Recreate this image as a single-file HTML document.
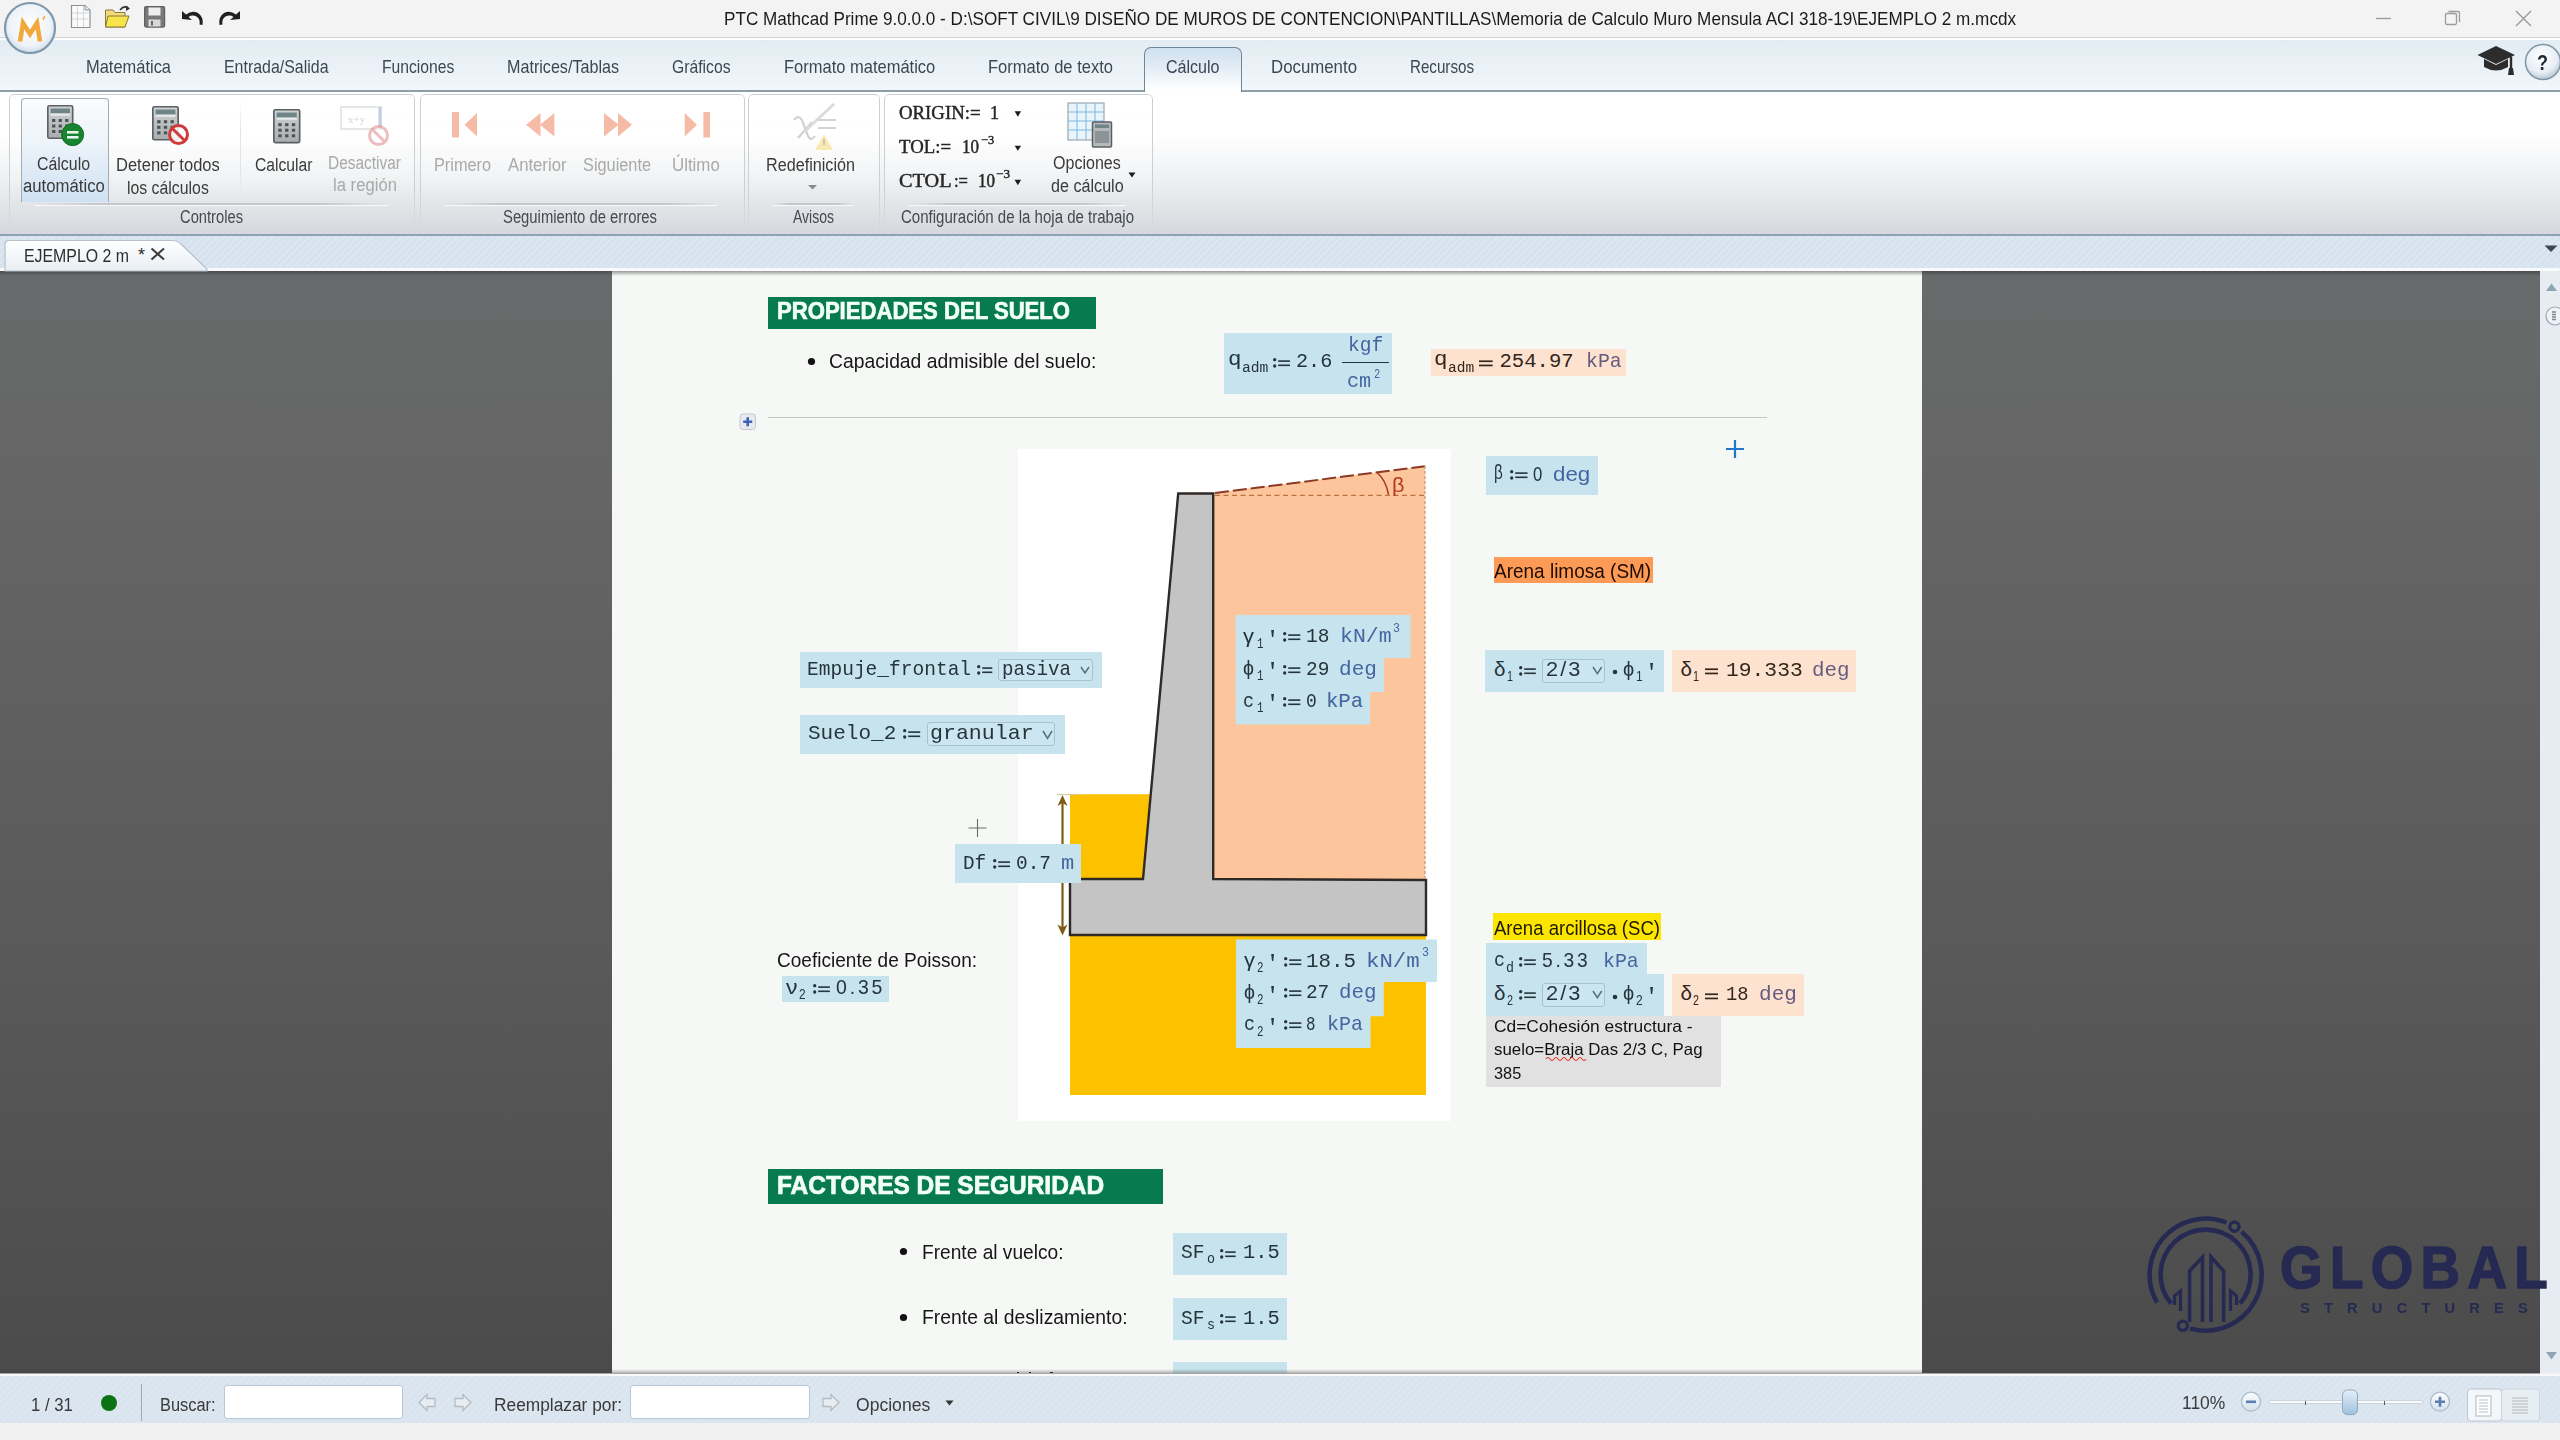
<!DOCTYPE html>
<html><head><meta charset="utf-8"><title>Mathcad</title>
<style>
html,body{margin:0;padding:0;width:2560px;height:1440px;overflow:hidden;background:#f0f0f0}
.r{position:absolute;display:block}
.t{position:absolute;white-space:pre;line-height:1;transform-origin:0 0}
svg.r{overflow:visible}
</style></head><body>
<div class="r" style="left:0.00px;top:0.00px;width:2560.00px;height:37.00px;background:#f3f3f3;"></div>
<div class="r" style="left:0.00px;top:37.00px;width:2560.00px;height:1.00px;background:#cfd3d6;"></div>
<div class="r" style="left:0.00px;top:38.00px;width:2560.00px;height:2.00px;background:#fbfdfe;"></div>
<div class="r" style="left:0.00px;top:40.00px;width:2560.00px;height:50.00px;background:linear-gradient(#e3ecf2,#f1f7fb);"></div>
<div class="r" style="left:0.00px;top:90.00px;width:2560.00px;height:1.50px;background:#8e9fa8;"></div>
<div class="r" style="left:0.00px;top:91.50px;width:2560.00px;height:142.50px;background:linear-gradient(#ffffff 0%,#ffffff 30%,#eef0f2 62%,#d5d9dd 100%);"></div>
<div class="r" style="left:0.00px;top:234.00px;width:2560.00px;height:2.00px;background:#8da4b7;"></div>
<div class="r" style="left:0.00px;top:236.00px;width:2560.00px;height:32.00px;background:repeating-linear-gradient(135deg,#d6e3ef 0px,#d6e3ef 3px,#dbe7f1 3px,#dbe7f1 5px);"></div>
<div class="r" style="left:0.00px;top:268.00px;width:2560.00px;height:3.00px;background:#f8fafb;"></div>
<div class="r" style="left:0.00px;top:271.00px;width:2540.00px;height:1102.00px;background:linear-gradient(#686a6b 0%,#656565 20%,#5a5a5a 60%,#4b4b4b 100%);"></div>
<div class="r" style="left:612.00px;top:271.00px;width:1310.00px;height:1102.00px;background:#f6f8f6;"></div>
<div class="r" style="left:0.00px;top:271.00px;width:2540.00px;height:5.00px;background:linear-gradient(rgba(40,40,40,0.45),rgba(40,40,40,0));"></div>
<div class="r" style="left:2540.00px;top:271.00px;width:20.00px;height:1102.00px;background:#e6ecf2;"></div>
<div class="r" style="left:0.00px;top:1373.50px;width:2560.00px;height:2.50px;background:#f7f8f9;"></div>
<div class="r" style="left:0.00px;top:1376.00px;width:2560.00px;height:47.00px;background:repeating-linear-gradient(135deg,#d9e4ee 0px,#d9e4ee 3px,#dde7f0 3px,#dde7f0 5px);"></div>
<div class="r" style="left:0.00px;top:1423.00px;width:2560.00px;height:17.00px;background:#f1f1f1;"></div>
<svg class="r" style="left:0;top:0" width="300" height="60" viewBox="0 0 300 60">
<defs><radialGradient id="lg" cx="50%" cy="45%" r="55%"><stop offset="0" stop-color="#ffffff"/><stop offset="0.75" stop-color="#eef3f8"/><stop offset="1" stop-color="#cfdbe6"/></radialGradient></defs>
<circle cx="30" cy="28" r="25" fill="url(#lg)" stroke="#7d98ad" stroke-width="2.2"/>
<path d="M20 41.5 L23 23 L30 34 L37 23 L40 41.5" fill="none" stroke="#f3a83a" stroke-width="4.6" stroke-linejoin="miter" stroke-miterlimit="3"/>
<path d="M42.5 17.5 L45.5 15.5 L43.5 21 Z" fill="#f3a83a"/>
<g transform="translate(71,5)">
<path d="M0.5 0.5 H14 L19 5 V22.5 H0.5 Z" fill="#fbfbfb" stroke="#8d9296" stroke-width="1.2"/>
<path d="M14 0.5 V5 H19" fill="#e8e8e8" stroke="#8d9296" stroke-width="1"/>
<path d="M1 8 H18.5 M1 14 H18.5 M6.5 1 V22 M12.5 1 V22" stroke="#c8d0d6" stroke-width="0.8"/>
</g>
<g transform="translate(105,4)">
<path d="M0.5 6 H8 L10 8.5 H20 V23 H0.5 Z" fill="#f0dc7a" stroke="#8a7a3a" stroke-width="1"/>
<path d="M3 12 H24 L20 23 H0.5 Z" fill="#f7e34a" stroke="#8a7a3a" stroke-width="1"/>
<path d="M15 6 Q19 1 23 4" fill="none" stroke="#333" stroke-width="1.6"/>
<path d="M21 1.5 L25 4.5 L21 7 Z" fill="#333"/>
</g>
<g transform="translate(144,6)">
<rect x="0.6" y="0.6" width="20" height="20.5" rx="1.5" fill="#77797b" stroke="#5d5f61" stroke-width="1.2"/>
<rect x="4.5" y="1.5" width="12" height="8" fill="#eeeeee"/>
<rect x="4.5" y="13.5" width="12" height="7" fill="#d8d8d8"/>
<rect x="7" y="15" width="2" height="4.5" fill="#666"/>
</g>
<g transform="translate(180,9)">
<path d="M2 10 L2 2 L6 5.5 Q12 1 18 4 Q24 8 22.5 16 L19.5 15.5 Q20.5 10 16.5 7.5 Q12 5.5 8.5 8 L12 11 Z" fill="#202020"/>
</g>
<g transform="translate(218,9)">
<path d="M22 10 L22 2 L18 5.5 Q12 1 6 4 Q0 8 1.5 16 L4.5 15.5 Q3.5 10 7.5 7.5 Q12 5.5 15.5 8 L12 11 Z" fill="#202020"/>
</g>
</svg>
<span id="t1" class="t" style="left:724.00px;top:9.59px;font-size:18.20px;font-family:'Liberation Sans', sans-serif;color:#1b1b1b;transform:scaleX(0.9418);">PTC Mathcad Prime 9.0.0.0 - D:\SOFT CIVIL\9 DISEÑO DE MUROS DE CONTENCION\PANTILLAS\Memoria de Calculo Muro Mensula ACI 318-19\EJEMPLO 2 m.mcdx</span>
<svg class="r" style="left:2360;top:0" width="200" height="37" viewBox="0 0 200 37">
<path d="M16 18.5 H31" stroke="#9a9a9a" stroke-width="1.3"/>
<rect x="85.5" y="13.5" width="11" height="11" rx="1.5" fill="none" stroke="#9a9a9a" stroke-width="1.3"/>
<path d="M88.5 11.5 H98 Q99.5 11.5 99.5 13 V22" fill="none" stroke="#9a9a9a" stroke-width="1.3"/>
<path d="M156 11 L171 26 M171 11 L156 26" stroke="#9a9a9a" stroke-width="1.4"/>
</svg>
<div class="r" style="left:1143.5px;top:47px;width:96px;height:44px;border:1.5px solid #6f8698;border-bottom:none;border-radius:7px 7px 0 0;background:linear-gradient(#cfe0ef,#e6eef6 50%,#ffffff 95%)"></div>
<span id="t2" class="t" style="left:86.00px;top:57.64px;font-size:18.50px;font-family:'Liberation Sans', sans-serif;color:#3e4750;transform:scaleX(0.8889);">Matemática</span>
<span id="t3" class="t" style="left:224.00px;top:57.64px;font-size:18.50px;font-family:'Liberation Sans', sans-serif;color:#3e4750;transform:scaleX(0.8610);">Entrada/Salida</span>
<span id="t4" class="t" style="left:382.00px;top:57.64px;font-size:18.50px;font-family:'Liberation Sans', sans-serif;color:#3e4750;transform:scaleX(0.8470);">Funciones</span>
<span id="t5" class="t" style="left:507.00px;top:57.64px;font-size:18.50px;font-family:'Liberation Sans', sans-serif;color:#3e4750;transform:scaleX(0.8715);">Matrices/Tablas</span>
<span id="t6" class="t" style="left:672.00px;top:57.64px;font-size:18.50px;font-family:'Liberation Sans', sans-serif;color:#3e4750;transform:scaleX(0.8492);">Gráficos</span>
<span id="t7" class="t" style="left:783.75px;top:57.64px;font-size:18.50px;font-family:'Liberation Sans', sans-serif;color:#3e4750;transform:scaleX(0.8916);">Formato matemático</span>
<span id="t8" class="t" style="left:988.00px;top:57.64px;font-size:18.50px;font-family:'Liberation Sans', sans-serif;color:#3e4750;transform:scaleX(0.8939);">Formato de texto</span>
<span id="t9" class="t" style="left:1166.00px;top:57.64px;font-size:18.50px;font-family:'Liberation Sans', sans-serif;color:#3e4750;transform:scaleX(0.8671);">Cálculo</span>
<span id="t10" class="t" style="left:1271.00px;top:57.64px;font-size:18.50px;font-family:'Liberation Sans', sans-serif;color:#3e4750;transform:scaleX(0.9090);">Documento</span>
<span id="t11" class="t" style="left:1410.00px;top:57.64px;font-size:18.50px;font-family:'Liberation Sans', sans-serif;color:#3e4750;transform:scaleX(0.8190);">Recursos</span>
<svg class="r" style="left:2470;top:40" width="90" height="44" viewBox="0 0 90 44">
<path d="M7.5 15 L26 6 L45 15 L26 24 Z" fill="#2c2c2c"/>
<path d="M14 19 V27 Q26 34 38 27 V19 L26 25 Z" fill="#2c2c2c"/>
<path d="M41 16.5 V31" stroke="#2c2c2c" stroke-width="2.4"/>
<path d="M39 28 L43 28 L44 35 L38 35 Z" fill="#2c2c2c"/>
<defs><radialGradient id="hg" cx="45%" cy="35%" r="65%"><stop offset="0" stop-color="#ffffff"/><stop offset="0.7" stop-color="#e7eef5"/><stop offset="1" stop-color="#b9c8d6"/></radialGradient></defs>
<circle cx="73" cy="22" r="17.5" fill="url(#hg)" stroke="#8198ab" stroke-width="1.5"/>
</svg>
<span id="t12" class="t" style="left:2536.50px;top:51.87px;font-size:22.00px;font-family:'Liberation Sans', sans-serif;color:#1e2a33;font-weight:700;transform:scaleX(0.8177);">?</span>
<div class="r" style="left:9.0px;top:94px;width:404.0px;height:136px;border:1px solid #c9d0d6;border-bottom:none;border-radius:5px 5px 0 0;background:linear-gradient(rgba(255,255,255,0.6),rgba(255,255,255,0) 80%);-webkit-mask-image:linear-gradient(#000 70%,rgba(0,0,0,0.15) 100%)"></div>
<div class="r" style="left:34.00px;top:203.00px;width:354.00px;height:1.50px;background:linear-gradient(90deg,rgba(190,196,202,0),rgba(190,196,202,0.9) 20%,rgba(190,196,202,0.9) 80%,rgba(190,196,202,0));"></div>
<div class="r" style="left:34.00px;top:204.50px;width:354.00px;height:1.00px;background:rgba(255,255,255,0.8);"></div>
<div class="r" style="left:419.5px;top:94px;width:323.5px;height:136px;border:1px solid #c9d0d6;border-bottom:none;border-radius:5px 5px 0 0;background:linear-gradient(rgba(255,255,255,0.6),rgba(255,255,255,0) 80%);-webkit-mask-image:linear-gradient(#000 70%,rgba(0,0,0,0.15) 100%)"></div>
<div class="r" style="left:444.50px;top:203.00px;width:273.50px;height:1.50px;background:linear-gradient(90deg,rgba(190,196,202,0),rgba(190,196,202,0.9) 20%,rgba(190,196,202,0.9) 80%,rgba(190,196,202,0));"></div>
<div class="r" style="left:444.50px;top:204.50px;width:273.50px;height:1.00px;background:rgba(255,255,255,0.8);"></div>
<div class="r" style="left:747.5px;top:94px;width:130.5px;height:136px;border:1px solid #c9d0d6;border-bottom:none;border-radius:5px 5px 0 0;background:linear-gradient(rgba(255,255,255,0.6),rgba(255,255,255,0) 80%);-webkit-mask-image:linear-gradient(#000 70%,rgba(0,0,0,0.15) 100%)"></div>
<div class="r" style="left:772.50px;top:203.00px;width:80.50px;height:1.50px;background:linear-gradient(90deg,rgba(190,196,202,0),rgba(190,196,202,0.9) 20%,rgba(190,196,202,0.9) 80%,rgba(190,196,202,0));"></div>
<div class="r" style="left:772.50px;top:204.50px;width:80.50px;height:1.00px;background:rgba(255,255,255,0.8);"></div>
<div class="r" style="left:884.0px;top:94px;width:267.0px;height:136px;border:1px solid #c9d0d6;border-bottom:none;border-radius:5px 5px 0 0;background:linear-gradient(rgba(255,255,255,0.6),rgba(255,255,255,0) 80%);-webkit-mask-image:linear-gradient(#000 70%,rgba(0,0,0,0.15) 100%)"></div>
<div class="r" style="left:909.00px;top:203.00px;width:217.00px;height:1.50px;background:linear-gradient(90deg,rgba(190,196,202,0),rgba(190,196,202,0.9) 20%,rgba(190,196,202,0.9) 80%,rgba(190,196,202,0));"></div>
<div class="r" style="left:909.00px;top:204.50px;width:217.00px;height:1.00px;background:rgba(255,255,255,0.8);"></div>
<div class="r" style="left:21px;top:97.5px;width:86px;height:103px;border:1px solid #a3abb3;border-bottom:none;border-radius:4px 4px 0 0;background:linear-gradient(#fafbfc,#eef4fa 40%,#cfe1f2)"></div>
<div class="r" style="left:239.50px;top:100.00px;width:1.00px;height:100.00px;background:linear-gradient(rgba(220,222,224,0),#e2e4e6 30%,#e2e4e6 70%,rgba(220,222,224,0));"></div>
<svg class="r" style="left:46.5px;top:105.0px;opacity:1" width="26.5" height="34.0" viewBox="0 0 26 34" preserveAspectRatio="none">
<defs><linearGradient id="cg46" x1="0" y1="0" x2="0" y2="1"><stop offset="0" stop-color="#cfd2d3"/><stop offset="1" stop-color="#a9adaf"/></linearGradient></defs>
<rect x="0.8" y="0.8" width="24.4" height="32.4" rx="1.5" fill="url(#cg46)" stroke="#5b6062" stroke-width="1.6"/>
<rect x="3.5" y="3.5" width="19" height="5" fill="#6e8486"/>
<rect x="3.5" y="8.5" width="19" height="2.2" fill="#e5eaea"/>
<g fill="#4d5355"><rect x="5" y="14" width="3.2" height="3"/><rect x="11.4" y="14" width="3.2" height="3"/><rect x="17.8" y="14" width="3.2" height="3"/>
<rect x="5" y="19.5" width="3.2" height="3"/><rect x="11.4" y="19.5" width="3.2" height="3"/><rect x="17.8" y="19.5" width="3.2" height="3"/>
<rect x="5" y="25" width="3.2" height="3"/><rect x="11.4" y="25" width="3.2" height="3"/><rect x="17.8" y="25" width="3.2" height="3"/></g>
</svg>
<svg class="r" style="left:60px;top:122px" width="26" height="26" viewBox="0 0 26 26"><circle cx="12.6" cy="12.6" r="11" fill="#17852f" stroke="#0f6a22" stroke-width="1"/><rect x="7" y="9" width="11.5" height="2.6" fill="#e8f5ea"/><rect x="7" y="14" width="11.5" height="2.6" fill="#e8f5ea"/></svg>
<svg class="r" style="left:152.0px;top:106.0px;opacity:1" width="27.0" height="34.5" viewBox="0 0 26 34" preserveAspectRatio="none">
<defs><linearGradient id="cg152" x1="0" y1="0" x2="0" y2="1"><stop offset="0" stop-color="#cfd2d3"/><stop offset="1" stop-color="#a9adaf"/></linearGradient></defs>
<rect x="0.8" y="0.8" width="24.4" height="32.4" rx="1.5" fill="url(#cg152)" stroke="#5b6062" stroke-width="1.6"/>
<rect x="3.5" y="3.5" width="19" height="5" fill="#6e8486"/>
<rect x="3.5" y="8.5" width="19" height="2.2" fill="#e5eaea"/>
<g fill="#4d5355"><rect x="5" y="14" width="3.2" height="3"/><rect x="11.4" y="14" width="3.2" height="3"/><rect x="17.8" y="14" width="3.2" height="3"/>
<rect x="5" y="19.5" width="3.2" height="3"/><rect x="11.4" y="19.5" width="3.2" height="3"/><rect x="17.8" y="19.5" width="3.2" height="3"/>
<rect x="5" y="25" width="3.2" height="3"/><rect x="11.4" y="25" width="3.2" height="3"/><rect x="17.8" y="25" width="3.2" height="3"/></g>
</svg>
<svg class="r" style="left:165.9px;top:122.1px;opacity:1" width="25.0" height="25.0" viewBox="0 0 25.0 25.0"><circle cx="12.5" cy="12.5" r="9.0" fill="rgba(255,255,255,0.85)" stroke="#cf3a3a" stroke-width="3"/><path d="M6.2 6.2 L18.8 18.8" stroke="#cf3a3a" stroke-width="3"/></svg>
<svg class="r" style="left:272.5px;top:109.4px;opacity:1" width="27.5" height="34.4" viewBox="0 0 26 34" preserveAspectRatio="none">
<defs><linearGradient id="cg272" x1="0" y1="0" x2="0" y2="1"><stop offset="0" stop-color="#cfd2d3"/><stop offset="1" stop-color="#a9adaf"/></linearGradient></defs>
<rect x="0.8" y="0.8" width="24.4" height="32.4" rx="1.5" fill="url(#cg272)" stroke="#5b6062" stroke-width="1.6"/>
<rect x="3.5" y="3.5" width="19" height="5" fill="#6e8486"/>
<rect x="3.5" y="8.5" width="19" height="2.2" fill="#e5eaea"/>
<g fill="#4d5355"><rect x="5" y="14" width="3.2" height="3"/><rect x="11.4" y="14" width="3.2" height="3"/><rect x="17.8" y="14" width="3.2" height="3"/>
<rect x="5" y="19.5" width="3.2" height="3"/><rect x="11.4" y="19.5" width="3.2" height="3"/><rect x="17.8" y="19.5" width="3.2" height="3"/>
<rect x="5" y="25" width="3.2" height="3"/><rect x="11.4" y="25" width="3.2" height="3"/><rect x="17.8" y="25" width="3.2" height="3"/></g>
</svg>
<svg class="r" style="left:340px;top:106px;opacity:0.35" width="46" height="32" viewBox="0 0 46 32"><rect x="1" y="1" width="40" height="22" fill="#fff" stroke="#9aa4b0" stroke-width="1.5"/><path d="M40 1 V21" stroke="#5570b0" stroke-width="3"/><text x="8" y="17" font-size="11" fill="#888" font-family="Liberation Serif">x+y</text></svg>
<svg class="r" style="left:366.3px;top:122.9px;opacity:0.55" width="25.0" height="25.0" viewBox="0 0 25.0 25.0"><circle cx="12.5" cy="12.5" r="9.0" fill="rgba(255,255,255,0.85)" stroke="#e08a8a" stroke-width="3"/><path d="M6.2 6.2 L18.8 18.8" stroke="#e08a8a" stroke-width="3"/></svg>
<span id="t13" class="t" style="left:37.30px;top:154.56px;font-size:18.00px;font-family:'Liberation Sans', sans-serif;color:#3b3b3b;transform:scaleX(0.8829);">Cálculo</span>
<span id="t14" class="t" style="left:22.70px;top:177.26px;font-size:18.00px;font-family:'Liberation Sans', sans-serif;color:#3b3b3b;transform:scaleX(0.9289);">automático</span>
<span id="t15" class="t" style="left:116.20px;top:156.26px;font-size:18.00px;font-family:'Liberation Sans', sans-serif;color:#3b3b3b;transform:scaleX(0.9179);">Detener todos</span>
<span id="t16" class="t" style="left:127.20px;top:178.96px;font-size:18.00px;font-family:'Liberation Sans', sans-serif;color:#3b3b3b;transform:scaleX(0.8791);">los cálculos</span>
<span id="t17" class="t" style="left:255.30px;top:156.26px;font-size:18.00px;font-family:'Liberation Sans', sans-serif;color:#3b3b3b;transform:scaleX(0.8708);">Calcular</span>
<span id="t18" class="t" style="left:328.40px;top:153.76px;font-size:18.00px;font-family:'Liberation Sans', sans-serif;color:#a9a9a9;transform:scaleX(0.8585);">Desactivar</span>
<span id="t19" class="t" style="left:333.40px;top:176.46px;font-size:18.00px;font-family:'Liberation Sans', sans-serif;color:#a9a9a9;transform:scaleX(0.9269);">la región</span>
<span id="t20" class="t" style="left:180.00px;top:207.76px;font-size:18.00px;font-family:'Liberation Sans', sans-serif;color:#444a50;transform:scaleX(0.8177);">Controles</span>
<svg class="r" style="left:440px;top:105px" width="290" height="40" viewBox="440 105 290 40">
<rect x="452" y="112" width="7" height="25.5" fill="#f6bba6"/><path d="M477 113 L477 136.5 L464.5 124.8 Z" fill="#f6bba6"/>
<path d="M540.5 113 L540.5 136.6 L526 124.8 Z M554.4 113 L554.4 136.6 L540 124.8 Z" fill="#f6bba6"/>
<path d="M604 113 L604 136.6 L618.5 124.8 Z M618 113 L618 136.6 L632 124.8 Z" fill="#f6bba6"/>
<path d="M684.7 113 L684.7 136.5 L697 124.8 Z" fill="#f6bba6"/><rect x="703.4" y="112" width="6.6" height="25.5" fill="#f6bba6"/>
</svg>
<span id="t21" class="t" style="left:434.00px;top:156.06px;font-size:18.00px;font-family:'Liberation Sans', sans-serif;color:#a9a9a9;transform:scaleX(0.9045);">Primero</span>
<span id="t22" class="t" style="left:507.50px;top:156.06px;font-size:18.00px;font-family:'Liberation Sans', sans-serif;color:#a9a9a9;transform:scaleX(0.9281);">Anterior</span>
<span id="t23" class="t" style="left:583.40px;top:156.06px;font-size:18.00px;font-family:'Liberation Sans', sans-serif;color:#a9a9a9;transform:scaleX(0.9059);">Siguiente</span>
<span id="t24" class="t" style="left:671.60px;top:156.06px;font-size:18.00px;font-family:'Liberation Sans', sans-serif;color:#a9a9a9;transform:scaleX(0.9370);">Último</span>
<span id="t25" class="t" style="left:503.40px;top:207.56px;font-size:18.00px;font-family:'Liberation Sans', sans-serif;color:#444a50;transform:scaleX(0.8230);">Seguimiento de errores</span>
<svg class="r" style="left:788px;top:100px;opacity:0.45" width="52" height="54" viewBox="0 0 52 54">
<path d="M6 20 Q10 14 14 20 L20 36 Q23 42 27 36" fill="none" stroke="#9a9a9a" stroke-width="2.2"/>
<path d="M24 22 L10 38" stroke="#9a9a9a" stroke-width="2.2"/>
<path d="M16 32 L46 4" stroke="#b0b0b0" stroke-width="3"/>
<path d="M30 20 H48 M30 28 H48" stroke="#a0a0a0" stroke-width="2.2"/>
<path d="M36 34 L45 50 L27 50 Z" fill="#f2d45a"/><path d="M36 39 V45" stroke="#7a6a30" stroke-width="1.6"/>
</svg>
<span id="t26" class="t" style="left:765.50px;top:156.06px;font-size:18.00px;font-family:'Liberation Sans', sans-serif;color:#3b3b3b;transform:scaleX(0.8984);">Redefinición</span>
<svg class="r" style="left:808px;top:185px" width="9" height="5" viewBox="0 0 9 5"><path d="M0 0 H9 L4.5 4.5 Z" fill="#8a8a8a"/></svg>
<span id="t27" class="t" style="left:792.50px;top:207.56px;font-size:18.00px;font-family:'Liberation Sans', sans-serif;color:#444a50;transform:scaleX(0.7779);">Avisos</span>
<span id="t28" class="t" style="left:899.00px;top:103.51px;font-size:18.50px;font-family:'Liberation Serif', serif;color:#262626;transform:scaleX(1.0158);-webkit-text-stroke:0.45px #262626;">ORIGIN:=</span>
<span id="t29" class="t" style="left:990.00px;top:103.51px;font-size:18.50px;font-family:'Liberation Serif', serif;color:#262626;transform:scaleX(0.9730);-webkit-text-stroke:0.45px #262626;">1</span>
<span id="t30" class="t" style="left:899.00px;top:137.51px;font-size:18.50px;font-family:'Liberation Serif', serif;color:#262626;transform:scaleX(1.0156);-webkit-text-stroke:0.45px #262626;">TOL:=</span>
<span id="t31" class="t" style="left:961.50px;top:137.51px;font-size:18.50px;font-family:'Liberation Serif', serif;color:#262626;transform:scaleX(0.9189);-webkit-text-stroke:0.45px #262626;">10</span>
<span id="t32" class="t" style="left:980.60px;top:134.03px;font-size:12.50px;font-family:'Liberation Serif', serif;color:#262626;transform:scaleX(0.9915);-webkit-text-stroke:0.45px #262626;">−3</span>
<span id="t33" class="t" style="left:899.00px;top:171.51px;font-size:18.50px;font-family:'Liberation Serif', serif;color:#262626;transform:scaleX(1.0945);-webkit-text-stroke:0.45px #262626;">CTOL</span>
<span id="t34" class="t" style="left:953.50px;top:171.51px;font-size:18.50px;font-family:'Liberation Serif', serif;color:#262626;transform:scaleX(0.8987);-webkit-text-stroke:0.45px #262626;">:=</span>
<span id="t35" class="t" style="left:978.00px;top:171.51px;font-size:18.50px;font-family:'Liberation Serif', serif;color:#262626;transform:scaleX(0.9189);-webkit-text-stroke:0.45px #262626;">10</span>
<span id="t36" class="t" style="left:996.00px;top:168.03px;font-size:12.50px;font-family:'Liberation Serif', serif;color:#262626;transform:scaleX(1.0516);-webkit-text-stroke:0.45px #262626;">−3</span>
<svg class="r" style="left:1010px;top:105px" width="130" height="85" viewBox="1010 105 130 85">
<path d="M1014.6 111.3 H1021.1 L1017.85 116.8 Z M1014.6 145.8 H1021.1 L1017.85 150.7 Z M1014.6 179.7 H1021.1 L1017.85 185.2 Z M1128.4 172.6 H1135.5 L1131.95 177.5 Z" fill="#1e1e1e"/>
</svg>
<svg class="r" style="left:1066px;top:101px" width="50" height="50" viewBox="0 0 50 50">
<rect x="2" y="2" width="36" height="37" fill="#eaf4fb" stroke="#9aa7b0" stroke-width="1.2"/>
<path d="M11 2 V39 M20 2 V39 M29 2 V39 M2 11 H38 M2 20 H38 M2 29 H38" stroke="#7ab8e0" stroke-width="1"/>
<rect x="26.5" y="21" width="19" height="25" rx="1" fill="#b5b9bb" stroke="#5b6062" stroke-width="1.5"/>
<rect x="29" y="23.5" width="14" height="3.5" fill="#6e8486"/>
<rect x="29" y="30" width="14" height="12" fill="#8e9396"/>
</svg>
<span id="t37" class="t" style="left:1052.90px;top:154.06px;font-size:18.00px;font-family:'Liberation Sans', sans-serif;color:#3b3b3b;transform:scaleX(0.8916);">Opciones</span>
<span id="t38" class="t" style="left:1050.70px;top:177.06px;font-size:18.00px;font-family:'Liberation Sans', sans-serif;color:#3b3b3b;transform:scaleX(0.8968);">de cálculo</span>
<span id="t39" class="t" style="left:901.30px;top:207.76px;font-size:18.00px;font-family:'Liberation Sans', sans-serif;color:#444a50;transform:scaleX(0.8345);">Configuración de la hoja de trabajo</span>
<svg class="r" style="left:0;top:236px" width="230" height="35" viewBox="0 236 230 35">
<defs><linearGradient id="dtg" x1="0" y1="0" x2="0" y2="1"><stop offset="0" stop-color="#ffffff"/><stop offset="1" stop-color="#e9eef3"/></linearGradient></defs>
<path d="M5 271 V245 Q5 240.5 10 240.5 H172 Q178 240.5 182 245 L207 269 L207 271 Z" fill="url(#dtg)" stroke="#b6c0c9" stroke-width="1.2"/>
</svg>
<span id="t40" class="t" style="left:23.50px;top:246.76px;font-size:18.00px;font-family:'Liberation Sans', sans-serif;color:#2e2e2e;transform:scaleX(0.8821);">EJEMPLO 2 m</span>
<span id="t41" class="t" style="left:138.00px;top:245.76px;font-size:18.00px;font-family:'Liberation Sans', sans-serif;color:#2e2e2e;">*</span>
<svg class="r" style="left:150px;top:247px" width="16" height="14" viewBox="0 0 16 14"><path d="M1.5 1.5 L14 12.5 M14 1.5 L1.5 12.5" stroke="#3a3a3a" stroke-width="2"/></svg>
<svg class="r" style="left:2544px;top:245px" width="14" height="8" viewBox="0 0 14 8"><path d="M0.5 0.5 H13.5 L7 7 Z" fill="#3b4652"/></svg>
<svg class="r" style="left:2545px;top:281px" width="14" height="45" viewBox="0 0 14 45"><path d="M1 10 L12 10 L6.5 2.5 Z" fill="#8fa5b3"/><circle cx="10" cy="35" r="9" fill="#eef2f6" stroke="#9aa5ae" stroke-width="1.2"/><path d="M7 31 H11 M7 33.5 H11 M7 36 H11 M7 38.5 H11" stroke="#7d878f" stroke-width="1.3"/></svg>
<svg class="r" style="left:2545px;top:1351px" width="14" height="10" viewBox="0 0 14 10"><path d="M1 1 L12 1 L6.5 8.5 Z" fill="#8fa5b3"/></svg>
<span id="t42" class="t" style="left:30.50px;top:1395.76px;font-size:18.00px;font-family:'Liberation Sans', sans-serif;color:#3a3a3a;transform:scaleX(0.9279);">1 / 31</span>
<svg class="r" style="left:100px;top:1394px" width="18" height="18" viewBox="0 0 18 18"><circle cx="9" cy="9" r="8" fill="#0a7412"/></svg>
<div class="r" style="left:141.00px;top:1384.00px;width:1.20px;height:37.00px;background:#9ea9b3;"></div>
<span id="t43" class="t" style="left:160.00px;top:1395.76px;font-size:18.00px;font-family:'Liberation Sans', sans-serif;color:#3a3a3a;transform:scaleX(0.9110);">Buscar:</span>
<div class="r" style="left:224px;top:1385.3px;width:177px;height:32px;background:#fff;border:1px solid #b9c8d6;border-radius:3px"></div>
<div class="r" style="left:629.7px;top:1385.3px;width:178px;height:32px;background:#fff;border:1px solid #b9c8d6;border-radius:3px"></div>
<svg class="r" style="left:417px;top:1393px" width="20" height="20" viewBox="0 0 20 20"><g transform="translate(19,0) scale(-1,1)"><path d="M1 5.5 H9 V1.5 L17 9.5 L9 17.5 V13.5 H1 Z" fill="#e7ecf0" stroke="#b2bcc4" stroke-width="1.3"/></g></svg>
<svg class="r" style="left:454px;top:1393px" width="20" height="20" viewBox="0 0 20 20"><path d="M1 5.5 H9 V1.5 L17 9.5 L9 17.5 V13.5 H1 Z" fill="#e7ecf0" stroke="#b2bcc4" stroke-width="1.3"/></svg>
<svg class="r" style="left:822px;top:1393px" width="20" height="20" viewBox="0 0 20 20"><path d="M1 5.5 H9 V1.5 L17 9.5 L9 17.5 V13.5 H1 Z" fill="#e7ecf0" stroke="#b2bcc4" stroke-width="1.3"/></svg>
<span id="t44" class="t" style="left:494.00px;top:1395.76px;font-size:18.00px;font-family:'Liberation Sans', sans-serif;color:#3a3a3a;transform:scaleX(0.9620);">Reemplazar por:</span>
<span id="t45" class="t" style="left:855.50px;top:1395.76px;font-size:18.00px;font-family:'Liberation Sans', sans-serif;color:#3a3a3a;transform:scaleX(0.9757);">Opciones</span>
<svg class="r" style="left:945px;top:1400px" width="9" height="6" viewBox="0 0 9 6"><path d="M0.5 0.5 H8.5 L4.5 5.5 Z" fill="#333"/></svg>
<span id="t46" class="t" style="left:2182.00px;top:1394.16px;font-size:18.00px;font-family:'Liberation Sans', sans-serif;color:#3a3a3a;transform:scaleX(0.9686);">110%</span>
<svg class="r" style="left:2235px;top:1385px" width="320" height="36" viewBox="2235 1385 320 36">
<defs><linearGradient id="zb" x1="0" y1="0" x2="0" y2="1"><stop offset="0" stop-color="#fdfefe"/><stop offset="1" stop-color="#d3e0ec"/></linearGradient>
<linearGradient id="th" x1="0" y1="0" x2="0" y2="1"><stop offset="0" stop-color="#e4eff8"/><stop offset="1" stop-color="#9fc1de"/></linearGradient></defs>
<circle cx="2251" cy="1401.7" r="9.5" fill="url(#zb)" stroke="#a9bccc" stroke-width="1.2"/><rect x="2246" y="1400.5" width="10" height="2.6" fill="#5a7fb0"/>
<rect x="2269" y="1400.5" width="154" height="3" rx="1.5" fill="#f8fafc" stroke="#c2ccd5" stroke-width="0.8"/>
<path d="M2305.5 1401 V1405 M2384.5 1401 V1405" stroke="#555" stroke-width="1"/>
<rect x="2342.5" y="1390" width="15" height="24.6" rx="5" fill="url(#th)" stroke="#8ea9c0" stroke-width="1"/>
<circle cx="2440" cy="1401.7" r="9.5" fill="url(#zb)" stroke="#a9bccc" stroke-width="1.2"/><path d="M2435 1401.8 H2445 M2440 1396.8 V1406.8" stroke="#5a7fb0" stroke-width="2.6"/>
<rect x="2467.5" y="1389" width="34" height="32" rx="3" fill="#f4f7fa" stroke="#b9c6d2" stroke-width="1"/>
<rect x="2501.5" y="1389" width="38" height="32" rx="3" fill="#e6edf3" stroke="#ccd6df" stroke-width="1"/>
<rect x="2476" y="1396" width="15" height="20" fill="#fff" stroke="#b0b7be" stroke-width="1"/>
<path d="M2479 1400 H2488 M2479 1403 H2488 M2479 1406 H2488 M2479 1409 H2488 M2479 1412 H2488" stroke="#b9bfc5" stroke-width="1"/>
<path d="M2512 1398 H2528 M2512 1401 H2528 M2512 1404 H2528 M2512 1407 H2528 M2512 1410 H2528 M2512 1413 H2528" stroke="#c5cbd1" stroke-width="1.6"/>
</svg>
<div class="r" style="left:768.20px;top:296.60px;width:327.80px;height:32.00px;background:#077a50;"></div>
<span id="t47" class="t" style="left:777.00px;top:298.56px;font-size:24.50px;font-family:'Liberation Sans', sans-serif;color:#f2fff8;font-weight:700;transform:scaleX(0.9018);-webkit-text-stroke:0.7px #f2fff8;">PROPIEDADES DEL SUELO</span>
<svg class="r" style="left:806.50px;top:356.50px" width="9" height="9" viewBox="0 0 9 9"><circle cx="4.5" cy="4.5" r="3.6" fill="#111"/></svg>
<span id="t48" class="t" style="left:828.80px;top:350.64px;font-size:20.50px;font-family:'Liberation Sans', sans-serif;color:#161616;transform:scaleX(0.9423);">Capacidad admisible del suelo:</span>
<div class="r" style="left:1224.20px;top:333.20px;width:167.80px;height:60.50px;background:#c7e4ee;"></div>
<span id="t49" class="t" style="left:1227.50px;top:350.22px;font-size:20.60px;font-family:'Liberation Mono', monospace;color:#26343c;transform:scaleX(1.0923);">q</span>
<span id="t50" class="t" style="left:1241.60px;top:361.17px;font-size:14.00px;font-family:'Liberation Mono', monospace;color:#26343c;transform:scaleX(1.0468);">adm</span>
<svg class="r" style="left:1273.00px;top:356.60px" width="17.00" height="12" viewBox="0 0 17.00 12"><circle cx="1.7" cy="2.7" r="1.65" fill="#26343c"/><circle cx="1.7" cy="9.0" r="1.65" fill="#26343c"/><rect x="5.2" y="3.3" width="11.80" height="1.6" fill="#26343c"/><rect x="5.2" y="7.5" width="11.80" height="1.6" fill="#26343c"/></svg>
<span id="t51" class="t" style="left:1295.90px;top:351.82px;font-size:20.60px;font-family:'Liberation Mono', monospace;color:#26343c;transform:scaleX(0.9790);">2.6</span>
<div class="r" style="left:1342.30px;top:361.80px;width:46.50px;height:1.50px;background:#26343c;"></div>
<span id="t52" class="t" style="left:1347.80px;top:335.82px;font-size:20.60px;font-family:'Liberation Mono', monospace;color:#4565a0;transform:scaleX(0.9493);">kgf</span>
<span id="t53" class="t" style="left:1347.40px;top:371.72px;font-size:20.60px;font-family:'Liberation Mono', monospace;color:#4565a0;transform:scaleX(0.9790);">cm</span>
<span id="t54" class="t" style="left:1374.40px;top:368.34px;font-size:13.00px;font-family:'Liberation Mono', monospace;color:#4565a0;transform:scaleX(0.7936);">2</span>
<div class="r" style="left:1431.20px;top:348.60px;width:195.10px;height:27.50px;background:#fde3cf;"></div>
<span id="t55" class="t" style="left:1434.00px;top:350.22px;font-size:20.60px;font-family:'Liberation Mono', monospace;color:#33261c;transform:scaleX(1.0923);">q</span>
<span id="t56" class="t" style="left:1447.90px;top:361.07px;font-size:14.00px;font-family:'Liberation Mono', monospace;color:#33261c;transform:scaleX(1.0389);">adm</span>
<svg class="r" style="left:1479.30px;top:356.80px" width="13.70" height="12" viewBox="0 0 13.70 12"><rect x="0" y="3.4" width="13.70" height="1.7" fill="#33261c"/><rect x="0" y="7.6" width="13.70" height="1.7" fill="#33261c"/></svg>
<span id="t57" class="t" style="left:1499.50px;top:352.22px;font-size:20.60px;font-family:'Liberation Mono', monospace;color:#33261c;">254.97</span>
<span id="t58" class="t" style="left:1586.30px;top:352.22px;font-size:20.60px;font-family:'Liberation Mono', monospace;color:#645c7e;transform:scaleX(0.9628);">kPa</span>
<div class="r" style="left:768.00px;top:416.80px;width:999.00px;height:1.20px;background:#c6c6c6;"></div>
<svg class="r" style="left:739px;top:413px" width="18" height="18" viewBox="0 0 18 18"><rect x="1" y="1" width="15.5" height="15.5" rx="3" fill="#e8eaee" stroke="#c3c8ce" stroke-width="1"/><path d="M8.7 4.3 V13.3 M4.2 8.8 H13.2" stroke="#3b62b8" stroke-width="2.6"/></svg>
<div class="r" style="left:1017.80px;top:448.70px;width:433.70px;height:672.30px;background:#ffffff;"></div>
<svg class="r" style="left:0;top:0" width="2560" height="1440" viewBox="0 0 2560 1440">
<polygon points="1213,493 1425,466.3 1425,880 1213,880" fill="#fdc59c"/>
<polygon points="1070,794.25 1150,794.25 1143,879 1070,879" fill="#fcc200"/>
<rect x="1070" y="934" width="356" height="161" fill="#fcc200"/>
<polygon points="1178.2,493.5 1213.2,493.5 1213.2,879 1426,880 1426,935 1070,935 1070,879 1143,879" fill="#c4c4c4" stroke="#302a27" stroke-width="2.4" stroke-linejoin="miter"/>
<path d="M1215 495.4 H1425" stroke="#b8743c" stroke-width="1.4" stroke-dasharray="5,3.5"/>
<path d="M1215 493 L1425 466.3" stroke="#8a3a24" stroke-width="2" stroke-dasharray="14,4"/>
<path d="M1425 466 V880" stroke="#d09a74" stroke-width="1.3" stroke-dasharray="3,2"/>
<path d="M1376.5 472 Q1386 480 1388.5 494.5" fill="none" stroke="#a83822" stroke-width="1.6"/>
<path d="M1057 794.5 H1078" stroke="#d8c7a0" stroke-width="1.2"/>
<path d="M1062.5 800 V931" stroke="#7d5c14" stroke-width="2.2"/>
<path d="M1062.5 795 L1057.5 806 L1062.5 803 L1067.5 806 Z" fill="#7d5c14"/>
<path d="M1062.5 935.5 L1057.5 924.5 L1062.5 927.5 L1067.5 924.5 Z" fill="#7d5c14"/>
<path d="M977.5 819 V837 M968.5 828 H986.5" stroke="#6a6a6a" stroke-width="1.1"/>
<path d="M1726 449 H1744 M1735 440 V458" stroke="#2078c8" stroke-width="2.2"/>
<polygon points="1235.6,615 1410.6,615 1410.6,658 1384,658 1384,692 1370,692 1370,724.6 1235.6,724.6" fill="#c7e4ee"/>
<polygon points="1236,939.5 1437,939.5 1437,982 1383.75,982 1383.75,1016.25 1370.5,1016.25 1370.5,1048 1236,1048" fill="#c7e4ee"/>
</svg>
<span id="t59" class="t" style="left:1391.50px;top:474.22px;font-size:21.00px;font-family:'Liberation Sans', sans-serif;color:#b33a22;transform:scaleX(1.0336);">β</span>
<span id="t60" class="t" style="left:1243.40px;top:625.76px;font-size:20.60px;font-family:'Liberation Sans', sans-serif;color:#26343c;transform:scaleX(1.0683);">γ</span>
<span id="t61" class="t" style="left:1256.90px;top:636.97px;font-size:14.00px;font-family:'Liberation Mono', monospace;color:#26343c;transform:scaleX(0.7732);">1</span>
<svg class="r" style="left:1269.90px;top:629.70px" width="5" height="8" viewBox="0 0 5 8"><path d="M1.2 0 H4 L3.2 7 H2 Z" fill="#26343c"/></svg>
<svg class="r" style="left:1283.40px;top:631.40px" width="17.30" height="12" viewBox="0 0 17.30 12"><circle cx="1.7" cy="2.7" r="1.65" fill="#26343c"/><circle cx="1.7" cy="9.0" r="1.65" fill="#26343c"/><rect x="5.2" y="3.3" width="12.10" height="1.6" fill="#26343c"/><rect x="5.2" y="7.5" width="12.10" height="1.6" fill="#26343c"/></svg>
<span id="t62" class="t" style="left:1305.60px;top:627.42px;font-size:20.60px;font-family:'Liberation Mono', monospace;color:#26343c;transform:scaleX(0.9466);">18</span>
<span id="t63" class="t" style="left:1339.60px;top:627.42px;font-size:20.60px;font-family:'Liberation Mono', monospace;color:#4565a0;transform:scaleX(1.0437);">kN/m</span>
<span id="t64" class="t" style="left:1392.70px;top:622.62px;font-size:12.50px;font-family:'Liberation Mono', monospace;color:#4565a0;transform:scaleX(0.9314);">3</span>
<span id="t65" class="t" style="left:1243.40px;top:657.86px;font-size:20.60px;font-family:'Liberation Sans', sans-serif;color:#26343c;transform:scaleX(0.9526);">ϕ</span>
<span id="t66" class="t" style="left:1256.90px;top:669.07px;font-size:14.00px;font-family:'Liberation Mono', monospace;color:#26343c;transform:scaleX(0.7732);">1</span>
<svg class="r" style="left:1269.90px;top:661.80px" width="5" height="8" viewBox="0 0 5 8"><path d="M1.2 0 H4 L3.2 7 H2 Z" fill="#26343c"/></svg>
<svg class="r" style="left:1283.40px;top:663.50px" width="17.30" height="12" viewBox="0 0 17.30 12"><circle cx="1.7" cy="2.7" r="1.65" fill="#26343c"/><circle cx="1.7" cy="9.0" r="1.65" fill="#26343c"/><rect x="5.2" y="3.3" width="12.10" height="1.6" fill="#26343c"/><rect x="5.2" y="7.5" width="12.10" height="1.6" fill="#26343c"/></svg>
<span id="t67" class="t" style="left:1305.60px;top:659.52px;font-size:20.60px;font-family:'Liberation Mono', monospace;color:#26343c;transform:scaleX(0.9466);">29</span>
<span id="t68" class="t" style="left:1338.70px;top:659.52px;font-size:20.60px;font-family:'Liberation Mono', monospace;color:#4565a0;transform:scaleX(1.0222);">deg</span>
<span id="t69" class="t" style="left:1243.40px;top:691.62px;font-size:20.60px;font-family:'Liberation Mono', monospace;color:#26343c;transform:scaleX(0.8900);">c</span>
<span id="t70" class="t" style="left:1256.90px;top:701.17px;font-size:14.00px;font-family:'Liberation Mono', monospace;color:#26343c;transform:scaleX(0.7732);">1</span>
<svg class="r" style="left:1269.90px;top:693.90px" width="5" height="8" viewBox="0 0 5 8"><path d="M1.2 0 H4 L3.2 7 H2 Z" fill="#26343c"/></svg>
<svg class="r" style="left:1283.40px;top:695.60px" width="17.30" height="12" viewBox="0 0 17.30 12"><circle cx="1.7" cy="2.7" r="1.65" fill="#26343c"/><circle cx="1.7" cy="9.0" r="1.65" fill="#26343c"/><rect x="5.2" y="3.3" width="12.10" height="1.6" fill="#26343c"/><rect x="5.2" y="7.5" width="12.10" height="1.6" fill="#26343c"/></svg>
<span id="t71" class="t" style="left:1305.60px;top:691.62px;font-size:20.60px;font-family:'Liberation Mono', monospace;color:#26343c;transform:scaleX(0.8738);">0</span>
<span id="t72" class="t" style="left:1326.00px;top:691.62px;font-size:20.60px;font-family:'Liberation Mono', monospace;color:#4565a0;">kPa</span>
<span id="t73" class="t" style="left:1243.75px;top:950.06px;font-size:20.60px;font-family:'Liberation Sans', sans-serif;color:#26343c;transform:scaleX(1.0683);">γ</span>
<span id="t74" class="t" style="left:1257.25px;top:961.27px;font-size:14.00px;font-family:'Liberation Mono', monospace;color:#26343c;transform:scaleX(0.7732);">2</span>
<svg class="r" style="left:1270.25px;top:954.00px" width="5" height="8" viewBox="0 0 5 8"><path d="M1.2 0 H4 L3.2 7 H2 Z" fill="#26343c"/></svg>
<svg class="r" style="left:1283.75px;top:955.70px" width="17.30" height="12" viewBox="0 0 17.30 12"><circle cx="1.7" cy="2.7" r="1.65" fill="#26343c"/><circle cx="1.7" cy="9.0" r="1.65" fill="#26343c"/><rect x="5.2" y="3.3" width="12.10" height="1.6" fill="#26343c"/><rect x="5.2" y="7.5" width="12.10" height="1.6" fill="#26343c"/></svg>
<span id="t75" class="t" style="left:1305.95px;top:951.72px;font-size:20.60px;font-family:'Liberation Mono', monospace;color:#26343c;transform:scaleX(1.0114);">18.5</span>
<span id="t76" class="t" style="left:1366.25px;top:951.72px;font-size:20.60px;font-family:'Liberation Mono', monospace;color:#4565a0;transform:scaleX(1.0872);">kN/m</span>
<span id="t77" class="t" style="left:1421.50px;top:946.92px;font-size:12.50px;font-family:'Liberation Mono', monospace;color:#4565a0;transform:scaleX(0.9314);">3</span>
<span id="t78" class="t" style="left:1243.75px;top:981.76px;font-size:20.60px;font-family:'Liberation Sans', sans-serif;color:#26343c;transform:scaleX(0.9526);">ϕ</span>
<span id="t79" class="t" style="left:1257.25px;top:992.97px;font-size:14.00px;font-family:'Liberation Mono', monospace;color:#26343c;transform:scaleX(0.7732);">2</span>
<svg class="r" style="left:1270.25px;top:985.70px" width="5" height="8" viewBox="0 0 5 8"><path d="M1.2 0 H4 L3.2 7 H2 Z" fill="#26343c"/></svg>
<svg class="r" style="left:1283.75px;top:987.40px" width="17.30" height="12" viewBox="0 0 17.30 12"><circle cx="1.7" cy="2.7" r="1.65" fill="#26343c"/><circle cx="1.7" cy="9.0" r="1.65" fill="#26343c"/><rect x="5.2" y="3.3" width="12.10" height="1.6" fill="#26343c"/><rect x="5.2" y="7.5" width="12.10" height="1.6" fill="#26343c"/></svg>
<span id="t80" class="t" style="left:1305.95px;top:983.42px;font-size:20.60px;font-family:'Liberation Mono', monospace;color:#26343c;transform:scaleX(0.9406);">27</span>
<span id="t81" class="t" style="left:1338.75px;top:983.42px;font-size:20.60px;font-family:'Liberation Mono', monospace;color:#4565a0;transform:scaleX(1.0114);">deg</span>
<span id="t82" class="t" style="left:1243.75px;top:1015.42px;font-size:20.60px;font-family:'Liberation Mono', monospace;color:#26343c;transform:scaleX(0.8900);">c</span>
<span id="t83" class="t" style="left:1257.25px;top:1024.97px;font-size:14.00px;font-family:'Liberation Mono', monospace;color:#26343c;transform:scaleX(0.7732);">2</span>
<svg class="r" style="left:1270.25px;top:1017.70px" width="5" height="8" viewBox="0 0 5 8"><path d="M1.2 0 H4 L3.2 7 H2 Z" fill="#26343c"/></svg>
<svg class="r" style="left:1283.75px;top:1019.40px" width="17.30" height="12" viewBox="0 0 17.30 12"><circle cx="1.7" cy="2.7" r="1.65" fill="#26343c"/><circle cx="1.7" cy="9.0" r="1.65" fill="#26343c"/><rect x="5.2" y="3.3" width="12.10" height="1.6" fill="#26343c"/><rect x="5.2" y="7.5" width="12.10" height="1.6" fill="#26343c"/></svg>
<span id="t84" class="t" style="left:1305.95px;top:1015.42px;font-size:20.60px;font-family:'Liberation Mono', monospace;color:#26343c;transform:scaleX(0.7686);">8</span>
<span id="t85" class="t" style="left:1327.00px;top:1015.42px;font-size:20.60px;font-family:'Liberation Mono', monospace;color:#4565a0;transform:scaleX(0.9709);">kPa</span>
<div class="r" style="left:799.90px;top:652.20px;width:302.10px;height:36.30px;background:#c7e4ee;"></div>
<span id="t86" class="t" style="left:806.50px;top:660.12px;font-size:20.60px;font-family:'Liberation Mono', monospace;color:#26343c;transform:scaleX(0.9484);">Empuje_frontal</span>
<svg class="r" style="left:976.50px;top:664.20px" width="15.30" height="12" viewBox="0 0 15.30 12"><circle cx="1.7" cy="2.7" r="1.65" fill="#26343c"/><circle cx="1.7" cy="9.0" r="1.65" fill="#26343c"/><rect x="5.2" y="3.3" width="10.10" height="1.6" fill="#26343c"/><rect x="5.2" y="7.5" width="10.10" height="1.6" fill="#26343c"/></svg>
<div class="r" style="left:998.40px;top:659.30px;width:95.00px;height:21.90px;border:1px solid #a7c2ce;border-radius:3px;background:#cbe6f0;box-sizing:border-box"></div>
<span id="t87" class="t" style="left:1001.80px;top:660.12px;font-size:20.60px;font-family:'Liberation Mono', monospace;color:#26343c;transform:scaleX(0.9305);">pasiva</span>
<svg class="r" style="left:1080.00px;top:666.00px" width="10.00" height="8.00" viewBox="0 0 10.00 8.00"><path d="M1 1 L5.00 7.00 L9.00 1" fill="none" stroke="#55707c" stroke-width="1.5"/></svg>
<div class="r" style="left:799.90px;top:715.40px;width:265.00px;height:38.60px;background:#c7e4ee;"></div>
<span id="t88" class="t" style="left:807.90px;top:723.82px;font-size:20.60px;font-family:'Liberation Mono', monospace;color:#26343c;transform:scaleX(1.0206);">Suelo_2</span>
<svg class="r" style="left:902.80px;top:727.80px" width="17.20" height="12" viewBox="0 0 17.20 12"><circle cx="1.7" cy="2.7" r="1.65" fill="#26343c"/><circle cx="1.7" cy="9.0" r="1.65" fill="#26343c"/><rect x="5.2" y="3.3" width="12.00" height="1.6" fill="#26343c"/><rect x="5.2" y="7.5" width="12.00" height="1.6" fill="#26343c"/></svg>
<div class="r" style="left:926.70px;top:721.70px;width:128.60px;height:24.60px;border:1px solid #a7c2ce;border-radius:3px;background:#cbe6f0;box-sizing:border-box"></div>
<span id="t89" class="t" style="left:930.00px;top:723.82px;font-size:20.60px;font-family:'Liberation Mono', monospace;color:#26343c;transform:scaleX(1.0478);">granular</span>
<svg class="r" style="left:1042.00px;top:729.60px" width="11.00" height="9.40" viewBox="0 0 11.00 9.40"><path d="M1 1 L5.50 8.40 L10.00 1" fill="none" stroke="#55707c" stroke-width="1.5"/></svg>
<div class="r" style="left:955.00px;top:844.25px;width:125.75px;height:38.75px;background:#c7e4ee;"></div>
<span id="t90" class="t" style="left:963.00px;top:854.22px;font-size:20.60px;font-family:'Liberation Mono', monospace;color:#26343c;transform:scaleX(0.9406);">Df</span>
<svg class="r" style="left:993.00px;top:858.20px" width="17.00" height="12" viewBox="0 0 17.00 12"><circle cx="1.7" cy="2.7" r="1.65" fill="#26343c"/><circle cx="1.7" cy="9.0" r="1.65" fill="#26343c"/><rect x="5.2" y="3.3" width="11.80" height="1.6" fill="#26343c"/><rect x="5.2" y="7.5" width="11.80" height="1.6" fill="#26343c"/></svg>
<span id="t91" class="t" style="left:1016.25px;top:854.22px;font-size:20.60px;font-family:'Liberation Mono', monospace;color:#26343c;transform:scaleX(0.9440);">0.7</span>
<span id="t92" class="t" style="left:1061.25px;top:854.22px;font-size:20.60px;font-family:'Liberation Mono', monospace;color:#4565a0;transform:scaleX(1.0721);">m</span>
<span id="t93" class="t" style="left:776.90px;top:950.14px;font-size:20.50px;font-family:'Liberation Sans', sans-serif;color:#161616;transform:scaleX(0.9290);">Coeficiente de Poisson:</span>
<div class="r" style="left:782.00px;top:976.00px;width:106.90px;height:26.20px;background:#c7e4ee;"></div>
<span id="t94" class="t" style="left:786.00px;top:977.26px;font-size:20.60px;font-family:'Liberation Sans', sans-serif;color:#26343c;transform:scaleX(1.1168);">ν</span>
<span id="t95" class="t" style="left:799.40px;top:986.55px;font-size:14.00px;font-family:'Liberation Sans', sans-serif;color:#26343c;transform:scaleX(0.8465);">2</span>
<svg class="r" style="left:812.50px;top:983.20px" width="16.90" height="12" viewBox="0 0 16.90 12"><circle cx="1.7" cy="2.7" r="1.65" fill="#26343c"/><circle cx="1.7" cy="9.0" r="1.65" fill="#26343c"/><rect x="5.2" y="3.3" width="11.70" height="1.6" fill="#26343c"/><rect x="5.2" y="7.5" width="11.70" height="1.6" fill="#26343c"/></svg>
<span id="t96" class="t" style="left:835.50px;top:977.26px;font-size:20.60px;font-family:'Liberation Sans', sans-serif;color:#26343c;transform:scaleX(0.9445);letter-spacing:3px;">0.35</span>
<div class="r" style="left:1485.50px;top:456.00px;width:112.40px;height:38.80px;background:#c7e4ee;"></div>
<span id="t97" class="t" style="left:1494.20px;top:462.06px;font-size:20.60px;font-family:'Liberation Sans', sans-serif;color:#26343c;transform:scaleX(0.7420);">β</span>
<svg class="r" style="left:1509.50px;top:469.00px" width="17.50" height="12" viewBox="0 0 17.50 12"><circle cx="1.7" cy="2.7" r="1.65" fill="#26343c"/><circle cx="1.7" cy="9.0" r="1.65" fill="#26343c"/><rect x="5.2" y="3.3" width="12.30" height="1.6" fill="#26343c"/><rect x="5.2" y="7.5" width="12.30" height="1.6" fill="#26343c"/></svg>
<span id="t98" class="t" style="left:1533.00px;top:463.76px;font-size:20.60px;font-family:'Liberation Sans', sans-serif;color:#26343c;transform:scaleX(0.8109);">0</span>
<span id="t99" class="t" style="left:1552.70px;top:463.76px;font-size:20.60px;font-family:'Liberation Sans', sans-serif;color:#4565a0;transform:scaleX(1.0851);">deg</span>
<div class="r" style="left:1493.70px;top:557.20px;width:159.10px;height:26.20px;background:#fd9b56;"></div>
<span id="t100" class="t" style="left:1494.00px;top:561.14px;font-size:20.50px;font-family:'Liberation Sans', sans-serif;color:#1d0c02;transform:scaleX(0.9261);">Arena limosa (SM)</span>
<div class="r" style="left:1485.00px;top:650.00px;width:179.00px;height:41.70px;background:#c7e4ee;"></div>
<div class="r" style="left:1672.00px;top:650.00px;width:184.00px;height:41.70px;background:#fde3cf;"></div>
<span id="t101" class="t" style="left:1494.00px;top:658.96px;font-size:20.60px;font-family:'Liberation Sans', sans-serif;color:#26343c;">δ</span>
<span id="t102" class="t" style="left:1506.60px;top:668.55px;font-size:14.00px;font-family:'Liberation Sans', sans-serif;color:#26343c;transform:scaleX(0.7695);">1</span>
<svg class="r" style="left:1519.00px;top:664.80px" width="16.80" height="12" viewBox="0 0 16.80 12"><circle cx="1.7" cy="2.7" r="1.65" fill="#26343c"/><circle cx="1.7" cy="9.0" r="1.65" fill="#26343c"/><rect x="5.2" y="3.3" width="11.60" height="1.6" fill="#26343c"/><rect x="5.2" y="7.5" width="11.60" height="1.6" fill="#26343c"/></svg>
<div class="r" style="left:1542.40px;top:658.50px;width:63.10px;height:24.60px;border:1px solid #a7c2ce;border-radius:3px;background:#cbe6f0;box-sizing:border-box"></div>
<span id="t103" class="t" style="left:1546.40px;top:658.96px;font-size:20.60px;font-family:'Liberation Sans', sans-serif;color:#26343c;transform:scaleX(1.0566);letter-spacing:2px;">2/3</span>
<svg class="r" style="left:1592.20px;top:665.80px" width="10.70" height="8.60" viewBox="0 0 10.70 8.60"><path d="M1 1 L5.35 7.60 L9.70 1" fill="none" stroke="#55707c" stroke-width="1.5"/></svg>
<svg class="r" style="left:1612.3px;top:669.40px" width="6" height="6" viewBox="0 0 6 6"><circle cx="3" cy="3" r="2.3" fill="#26343c"/></svg>
<span id="t104" class="t" style="left:1622.80px;top:658.96px;font-size:20.60px;font-family:'Liberation Sans', sans-serif;color:#26343c;transform:scaleX(0.9700);">ϕ</span>
<span id="t105" class="t" style="left:1636.00px;top:668.55px;font-size:14.00px;font-family:'Liberation Sans', sans-serif;color:#26343c;transform:scaleX(0.8593);">1</span>
<svg class="r" style="left:1649.30px;top:663.10px" width="5" height="8" viewBox="0 0 5 8"><path d="M1.2 0 H4 L3.2 7 H2 Z" fill="#26343c"/></svg>
<span id="t106" class="t" style="left:1680.60px;top:658.96px;font-size:20.60px;font-family:'Liberation Sans', sans-serif;color:#33261c;">δ</span>
<span id="t107" class="t" style="left:1693.00px;top:668.55px;font-size:14.00px;font-family:'Liberation Sans', sans-serif;color:#33261c;transform:scaleX(0.7695);">1</span>
<svg class="r" style="left:1705.00px;top:665.30px" width="13.00" height="12" viewBox="0 0 13.00 12"><rect x="0" y="3.4" width="13.00" height="1.7" fill="#33261c"/><rect x="0" y="7.6" width="13.00" height="1.7" fill="#33261c"/></svg>
<span id="t108" class="t" style="left:1725.50px;top:660.62px;font-size:20.60px;font-family:'Liberation Mono', monospace;color:#33261c;transform:scaleX(1.0343);">19.333</span>
<span id="t109" class="t" style="left:1811.70px;top:660.62px;font-size:20.60px;font-family:'Liberation Mono', monospace;color:#645c7e;transform:scaleX(1.0141);">deg</span>
<div class="r" style="left:1493.30px;top:913.30px;width:168.00px;height:26.50px;background:#fde500;"></div>
<span id="t110" class="t" style="left:1494.00px;top:917.84px;font-size:20.50px;font-family:'Liberation Sans', sans-serif;color:#1d1a02;transform:scaleX(0.9050);">Arena arcillosa (SC)</span>
<div class="r" style="left:1485.60px;top:942.50px;width:161.10px;height:32.00px;background:#c7e4ee;"></div>
<div class="r" style="left:1485.60px;top:974.40px;width:178.40px;height:41.20px;background:#c7e4ee;"></div>
<div class="r" style="left:1671.90px;top:974.40px;width:132.10px;height:41.20px;background:#fde3cf;"></div>
<span id="t111" class="t" style="left:1494.00px;top:951.32px;font-size:20.60px;font-family:'Liberation Mono', monospace;color:#26343c;transform:scaleX(0.8900);">c</span>
<span id="t112" class="t" style="left:1505.90px;top:960.77px;font-size:14.00px;font-family:'Liberation Mono', monospace;color:#26343c;transform:scaleX(0.9517);">d</span>
<svg class="r" style="left:1519.00px;top:955.50px" width="16.80" height="12" viewBox="0 0 16.80 12"><circle cx="1.7" cy="2.7" r="1.65" fill="#26343c"/><circle cx="1.7" cy="9.0" r="1.65" fill="#26343c"/><rect x="5.2" y="3.3" width="11.60" height="1.6" fill="#26343c"/><rect x="5.2" y="7.5" width="11.60" height="1.6" fill="#26343c"/></svg>
<span id="t113" class="t" style="left:1542.40px;top:950.26px;font-size:20.60px;font-family:'Liberation Sans', sans-serif;color:#26343c;transform:scaleX(0.9329);letter-spacing:3px;">5.33</span>
<span id="t114" class="t" style="left:1602.90px;top:951.92px;font-size:20.60px;font-family:'Liberation Mono', monospace;color:#4565a0;transform:scaleX(0.9655);">kPa</span>
<span id="t115" class="t" style="left:1494.00px;top:983.16px;font-size:20.60px;font-family:'Liberation Sans', sans-serif;color:#26343c;">δ</span>
<span id="t116" class="t" style="left:1506.60px;top:992.75px;font-size:14.00px;font-family:'Liberation Sans', sans-serif;color:#26343c;transform:scaleX(0.7695);">2</span>
<svg class="r" style="left:1519.00px;top:989.00px" width="16.80" height="12" viewBox="0 0 16.80 12"><circle cx="1.7" cy="2.7" r="1.65" fill="#26343c"/><circle cx="1.7" cy="9.0" r="1.65" fill="#26343c"/><rect x="5.2" y="3.3" width="11.60" height="1.6" fill="#26343c"/><rect x="5.2" y="7.5" width="11.60" height="1.6" fill="#26343c"/></svg>
<div class="r" style="left:1542.40px;top:982.70px;width:63.10px;height:24.60px;border:1px solid #a7c2ce;border-radius:3px;background:#cbe6f0;box-sizing:border-box"></div>
<span id="t117" class="t" style="left:1546.40px;top:983.16px;font-size:20.60px;font-family:'Liberation Sans', sans-serif;color:#26343c;transform:scaleX(1.0566);letter-spacing:2px;">2/3</span>
<svg class="r" style="left:1592.20px;top:990.00px" width="10.70" height="8.60" viewBox="0 0 10.70 8.60"><path d="M1 1 L5.35 7.60 L9.70 1" fill="none" stroke="#55707c" stroke-width="1.5"/></svg>
<svg class="r" style="left:1612.3px;top:993.60px" width="6" height="6" viewBox="0 0 6 6"><circle cx="3" cy="3" r="2.3" fill="#26343c"/></svg>
<span id="t118" class="t" style="left:1622.80px;top:983.16px;font-size:20.60px;font-family:'Liberation Sans', sans-serif;color:#26343c;transform:scaleX(0.9700);">ϕ</span>
<span id="t119" class="t" style="left:1636.00px;top:992.75px;font-size:14.00px;font-family:'Liberation Sans', sans-serif;color:#26343c;transform:scaleX(0.8593);">2</span>
<svg class="r" style="left:1649.30px;top:987.30px" width="5" height="8" viewBox="0 0 5 8"><path d="M1.2 0 H4 L3.2 7 H2 Z" fill="#26343c"/></svg>
<span id="t120" class="t" style="left:1680.60px;top:983.16px;font-size:20.60px;font-family:'Liberation Sans', sans-serif;color:#33261c;">δ</span>
<span id="t121" class="t" style="left:1693.00px;top:992.75px;font-size:14.00px;font-family:'Liberation Sans', sans-serif;color:#33261c;transform:scaleX(0.7695);">2</span>
<svg class="r" style="left:1705.00px;top:989.50px" width="13.00" height="12" viewBox="0 0 13.00 12"><rect x="0" y="3.4" width="13.00" height="1.7" fill="#33261c"/><rect x="0" y="7.6" width="13.00" height="1.7" fill="#33261c"/></svg>
<span id="t122" class="t" style="left:1725.50px;top:984.82px;font-size:20.60px;font-family:'Liberation Mono', monospace;color:#33261c;transform:scaleX(0.9143);">18</span>
<span id="t123" class="t" style="left:1758.90px;top:984.82px;font-size:20.60px;font-family:'Liberation Mono', monospace;color:#645c7e;transform:scaleX(1.0222);">deg</span>
<div class="r" style="left:1485.60px;top:1015.60px;width:235.40px;height:71.70px;background:#e0e1e0;"></div>
<span id="t124" class="t" style="left:1494.00px;top:1018.23px;font-size:16.50px;font-family:'Liberation Sans', sans-serif;color:#111;transform:scaleX(1.0531);">Cd=Cohesión estructura -</span>
<span id="t125" class="t" style="left:1494.00px;top:1041.43px;font-size:16.50px;font-family:'Liberation Sans', sans-serif;color:#111;transform:scaleX(1.0217);">suelo=Braja Das 2/3 C, Pag</span>
<span id="t126" class="t" style="left:1494.00px;top:1064.63px;font-size:16.50px;font-family:'Liberation Sans', sans-serif;color:#111;transform:scaleX(0.9880);">385</span>
<svg class="r" style="left:1546px;top:1056px" width="42" height="6" viewBox="0 0 42 6"><path d="M0 3 Q2 0 4 3 T8 3 T12 3 T16 3 T20 3 T24 3 T28 3 T32 3 T36 3 T40 3" fill="none" stroke="#e0302a" stroke-width="1.1"/></svg>
<div class="r" style="left:768.10px;top:1169.00px;width:395.30px;height:35.40px;background:#077a50;"></div>
<span id="t127" class="t" style="left:776.60px;top:1173.23px;font-size:25.00px;font-family:'Liberation Sans', sans-serif;color:#f2fff8;font-weight:700;transform:scaleX(0.9787);-webkit-text-stroke:0.7px #f2fff8;">FACTORES DE SEGURIDAD</span>
<svg class="r" style="left:899.25px;top:1247.40px" width="9" height="9" viewBox="0 0 9 9"><circle cx="4.5" cy="4.5" r="3.6" fill="#111"/></svg>
<span id="t128" class="t" style="left:921.90px;top:1241.64px;font-size:20.50px;font-family:'Liberation Sans', sans-serif;color:#161616;transform:scaleX(0.9336);">Frente al vuelco:</span>
<svg class="r" style="left:899.25px;top:1313.00px" width="9" height="9" viewBox="0 0 9 9"><circle cx="4.5" cy="4.5" r="3.6" fill="#111"/></svg>
<span id="t129" class="t" style="left:921.90px;top:1307.34px;font-size:20.50px;font-family:'Liberation Sans', sans-serif;color:#161616;transform:scaleX(0.9447);">Frente al deslizamiento:</span>
<div class="r" style="left:1173.40px;top:1232.50px;width:114.10px;height:42.00px;background:#c7e4ee;"></div>
<span id="t130" class="t" style="left:1181.25px;top:1243.22px;font-size:20.60px;font-family:'Liberation Mono', monospace;color:#26343c;transform:scaleX(0.9507);">SF</span>
<span id="t131" class="t" style="left:1206.50px;top:1252.27px;font-size:14.00px;font-family:'Liberation Mono', monospace;color:#26343c;transform:scaleX(0.9517);">o</span>
<svg class="r" style="left:1220.30px;top:1247.50px" width="15.70" height="12" viewBox="0 0 15.70 12"><circle cx="1.7" cy="2.7" r="1.65" fill="#26343c"/><circle cx="1.7" cy="9.0" r="1.65" fill="#26343c"/><rect x="5.2" y="3.3" width="10.50" height="1.6" fill="#26343c"/><rect x="5.2" y="7.5" width="10.50" height="1.6" fill="#26343c"/></svg>
<span id="t132" class="t" style="left:1243.00px;top:1243.22px;font-size:20.60px;font-family:'Liberation Mono', monospace;color:#26343c;transform:scaleX(0.9898);">1.5</span>
<div class="r" style="left:1173.40px;top:1298.00px;width:114.10px;height:42.00px;background:#c7e4ee;"></div>
<span id="t133" class="t" style="left:1181.25px;top:1308.92px;font-size:20.60px;font-family:'Liberation Mono', monospace;color:#26343c;transform:scaleX(0.9507);">SF</span>
<span id="t134" class="t" style="left:1206.50px;top:1317.97px;font-size:14.00px;font-family:'Liberation Mono', monospace;color:#26343c;transform:scaleX(0.9517);">s</span>
<svg class="r" style="left:1220.30px;top:1313.20px" width="15.70" height="12" viewBox="0 0 15.70 12"><circle cx="1.7" cy="2.7" r="1.65" fill="#26343c"/><circle cx="1.7" cy="9.0" r="1.65" fill="#26343c"/><rect x="5.2" y="3.3" width="10.50" height="1.6" fill="#26343c"/><rect x="5.2" y="7.5" width="10.50" height="1.6" fill="#26343c"/></svg>
<span id="t135" class="t" style="left:1243.00px;top:1308.92px;font-size:20.60px;font-family:'Liberation Mono', monospace;color:#26343c;transform:scaleX(0.9898);">1.5</span>
<div class="r" style="left:1173.40px;top:1362.00px;width:114.10px;height:11.00px;background:#c7e4ee;"></div>
<div class="r" style="left:1016.50px;top:1371.50px;width:2.50px;height:1.60px;background:#222;"></div>
<div class="r" style="left:1028.50px;top:1371.50px;width:2.50px;height:1.60px;background:#222;"></div>
<div class="r" style="left:1050.00px;top:1371.50px;width:2.50px;height:1.60px;background:#222;"></div>
<div class="r" style="left:0.00px;top:1368.50px;width:2540.00px;height:5.00px;background:linear-gradient(rgba(60,60,60,0),rgba(60,60,60,0.45));"></div>
<svg class="r" style="left:0;top:0" width="2560" height="1440" viewBox="0 0 2560 1440"><g fill="none" stroke="#262a52"><path d="M2226.58 1222.68 A56.00 56.00 0 0 0 2157.10 1302.60" stroke-width="4.6"/><path d="M2241.60 1231.70 A56.00 56.00 0 0 1 2190.16 1328.43" stroke-width="4.6"/><circle cx="2234.44" cy="1226.60" r="4.6" stroke-width="3.4"/><circle cx="2182.82" cy="1325.76" r="4.6" stroke-width="3.4"/><path d="M2171.13 1303.53 A45.00 45.00 0 1 1 2240.07 1303.53" stroke-width="4.6"/><path d="M2189.6 1322 V1271 L2202.5 1257 V1322 M2211 1322 V1257 L2223.6 1271 V1322" stroke-width="3.6"/><path d="M2174.5 1305 V1296 L2180.5 1291 V1311 M2236.5 1305 V1296 L2230.5 1291 V1311" stroke-width="3.2"/></g></svg>
<span id="t136" class="t" style="left:2280.30px;top:1238.22px;font-size:59.50px;font-family:'Liberation Sans', sans-serif;color:#262a52;font-weight:700;transform:scaleX(0.9191);letter-spacing:8px;-webkit-text-stroke:1.6px #262a52;">GLOBAL</span>
<span id="t137" class="t" style="left:2300.00px;top:1300.92px;font-size:14.50px;font-family:'Liberation Sans', sans-serif;color:#262a52;font-weight:700;transform:scaleX(1.0122);letter-spacing:14px;">STRUCTURES</span>
</body></html>
